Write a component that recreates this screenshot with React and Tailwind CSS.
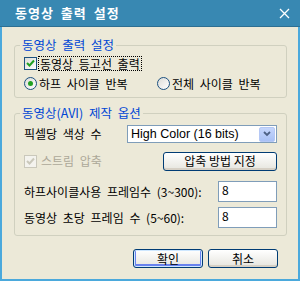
import React, { useState } from "react";

const FONT = { fontFamily: '"Noto Sans CJK KR", "Liberation Sans", sans-serif' };

const CheckBox = ({ checked, disabled }) => (
  <span
    className={`flex h-[13px] w-[13px] shrink-0 items-center justify-center border ${
      disabled ? "border-[#cac8bb] bg-[#f4f3ee]" : "border-[#1c5180] bg-gradient-to-br from-[#dcdcd7] to-white"
    }`}
  >
    {checked && (
      <svg width="9" height="9" viewBox="0 0 9 9">
        <path
          d="M1 4 L3.5 6.5 L8 1.5"
          fill="none"
          stroke={disabled ? "#cac8bb" : "#21a121"}
          strokeWidth="2"
        />
      </svg>
    )}
  </span>
);

const Radio = ({ checked }) => (
  <span className="flex h-[13px] w-[13px] shrink-0 items-center justify-center rounded-full border border-[#1c5180] bg-gradient-to-br from-[#dcdcd7] to-white">
    {checked && <span className="h-[5px] w-[5px] rounded-full bg-[#21a121]" />}
  </span>
);

const XpButton = ({ children, primary, className }) => (
  <button
    className={`flex items-center justify-center rounded-[3px] border border-[#003c74] bg-gradient-to-b from-white to-[#e6e5de] text-[12px] leading-none text-black ${
      primary ? "shadow-[inset_0_0_0_1px_#cee7ff,inset_0_-1px_0_2px_#6982ee]" : "shadow-[inset_0_-2px_0_0_#d6d0c5]"
    } ${className}`}
  >
    {children}
  </button>
);

export default function App() {
  const [halfCycle, setHalfCycle] = useState(true);
  const [contour, setContour] = useState(true);

  return (
    <div
      className="flex h-[281px] w-[300px] flex-col border-x-2 border-b-2 border-[#4ba9dc] bg-[#ece9d8] text-[12px] text-black [word-spacing:3px]"
      style={FONT}
    >
      {/* title bar */}
      <div className="-mx-[2px] flex h-[27px] shrink-0 items-center justify-between border-b border-[#2d6f92] bg-[#3888b2] pl-[15px] pr-[10px]">
        <span className="text-[13px] font-bold tracking-[1px] text-white">동영상 출력 설정</span>
        <svg width="11" height="11" viewBox="0 0 11 11">
          <path d="M1 1 L10 10 M10 1 L1 10" stroke="white" strokeWidth="1.3" />
        </svg>
      </div>

      <div className="flex flex-1 flex-col pl-[12px] pr-[11px]">
        {/* group 1 */}
        <fieldset className="mt-[10px] rounded-[3px] border border-[#d0d0bf] pb-[6px] pl-[9px] pr-[6px]">
          <legend className="-ml-[4px] px-[2px] text-[12.5px] leading-[16px] text-[#0046d5]">동영상 출력 설정</legend>
          <label className="mt-[3px] flex h-[15px] items-center" onClick={() => setContour(!contour)}>
            <CheckBox checked={contour} />
            <span className="ml-[1px] border border-dotted border-black px-[1px] leading-[13px]">
              동영상 등고선 출력
            </span>
          </label>
          <div className="mt-[5px] flex h-[15px] items-center">
            <label className="flex w-[133px] items-center gap-[2px]" onClick={() => setHalfCycle(true)}>
              <Radio checked={halfCycle} />
              <span>하프 사이클 반복</span>
            </label>
            <label className="flex items-center gap-[2px]" onClick={() => setHalfCycle(false)}>
              <Radio checked={!halfCycle} />
              <span>전체 사이클 반복</span>
            </label>
          </div>
        </fieldset>

        {/* group 2 */}
        <fieldset className="mt-[7px] rounded-[3px] border border-[#d0d0bf] pb-[7px] pl-[9px] pr-[9px]">
          <legend className="-ml-[4px] px-[2px] text-[12.5px] leading-[16px] text-[#0046d5]">동영상(AVI) 제작 옵션</legend>
          <div className="mt-[4px] flex h-[18px] items-center justify-between">
            <span>픽셀당 색상 수</span>
            <div className="flex h-[18px] w-[150px] items-center justify-between border border-[#7f9db9] bg-white pl-[3px] pr-[1px]">
              <span style={{ fontFamily: '"Liberation Sans", sans-serif' }} className="text-[12.5px] [word-spacing:0px]">
                High Color (16 bits)
              </span>
              <span className="flex h-[15px] w-[16px] items-center justify-center rounded-[2px] border border-[#b5c8f5] bg-gradient-to-b from-[#c5d6fc] to-[#a9c1f5]">
                <svg width="8" height="6" viewBox="0 0 8 6">
                  <path d="M1 1 L4 4 L7 1" fill="none" stroke="#4d6185" strokeWidth="1.8" />
                </svg>
              </span>
            </div>
          </div>
          <div className="mt-[9px] flex h-[18px] items-center justify-between">
            <div className="flex items-center gap-[4px] text-[#aca899]">
              <CheckBox checked disabled />
              <span>스트림 압축</span>
            </div>
            <XpButton className="h-[19px] w-[114px]">압축 방법 지정</XpButton>
          </div>
          <div className="mt-[11px] flex h-[21px] items-center justify-between">
            <span>하프사이클사용 프레임수 (3~300):</span>
            <div className="flex h-[21px] w-[59px] items-start border border-[#7f9db9] bg-white pl-[3px] leading-[16px]">8</div>
          </div>
          <div className="mt-[5px] flex h-[21px] items-center justify-between">
            <span>동영상 초당 프레임 수 (5~60):</span>
            <div className="flex h-[21px] w-[59px] items-start border border-[#7f9db9] bg-white pl-[3px] leading-[16px]">8</div>
          </div>
        </fieldset>

        {/* buttons */}
        <div className="mt-[13px] flex justify-end gap-[5px] pr-[9px]">
          <XpButton primary className="h-[19px] w-[70px]">확인</XpButton>
          <XpButton className="h-[19px] w-[70px]">취소</XpButton>
        </div>
      </div>
    </div>
  );
}
